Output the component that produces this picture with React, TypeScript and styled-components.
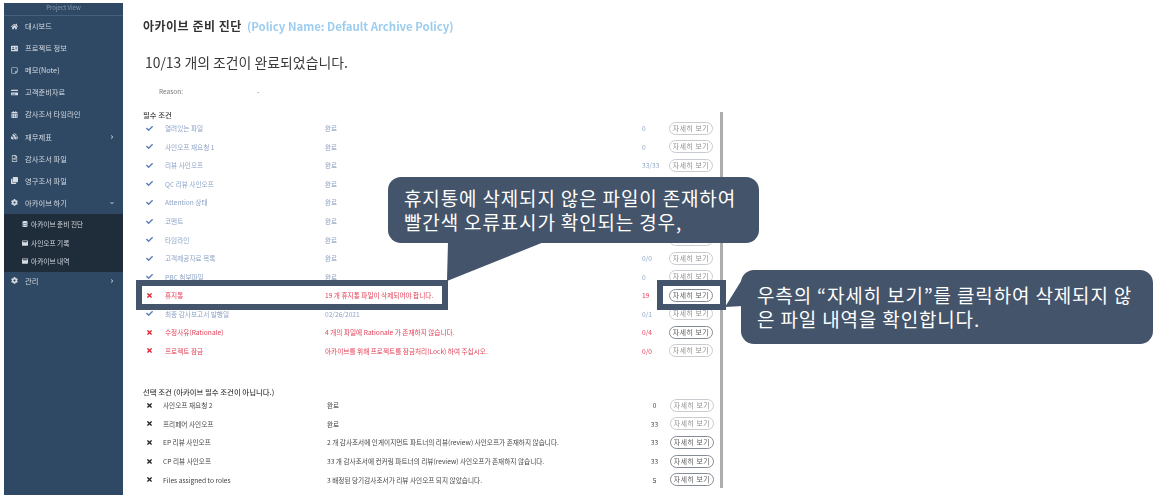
import React from 'react';
import styled, { createGlobalStyle } from 'styled-components';
import {
  FaHome, FaAddressCard, FaRegStickyNote, FaCreditCard, FaCalendarAlt, FaCubes, FaRegFileAlt,
  FaClone, FaCog, FaChevronRight, FaChevronDown, FaCheck, FaTimes, FaDatabase, FaWindowMaximize,
} from 'react-icons/fa';

const FONT = '"Noto Sans CJK KR", "Noto Sans", "Liberation Sans", sans-serif';
const NAVY = '#2f4863';
const SLATE = '#44546a';
const SOFT_BLUE = '#8ea3c6';
const RED = '#e23d55';

// == styles =======================================================================================
const GlobalStyle = createGlobalStyle`
  html, body {
    margin: 0;
    padding: 0;
    background: #fff;
    font-family: ${ FONT };
    overflow: hidden;
  }
`;

const Page = styled.div`
  position: relative;
  display: flex;
  width: 1155px;
  height: 497px;
  overflow: hidden;
`;

const Sidebar = styled.nav`
  flex: none;
  width: 119px;
  height: 492px;
  margin: 3px 0 0 4px;
  background: ${ NAVY };
  color: #d5dce4;
  filter: blur(0.3px);
`;

const SidebarHeader = styled.div`
  height: 12px;
  line-height: 9px;
  text-align: center;
  font-size: 6px;
  color: #8b9db0;
  border-bottom: 1px solid #43607c;
`;

const NavList = styled.div`
  display: flex;
  flex-direction: column;
  margin-top: -1px;
`;

const NavItem = styled.div`
  display: flex;
  align-items: center;
  height: ${ ( { $short } ) => $short ? '18px' : '22.1px' };
  padding: 0 9px 0 7px;
  font-size: 7.3px;
  svg { flex: none; width: 7px; height: 7px; }
`;

const Chevron = styled.span`
  display: flex;
  svg { width: 4px; height: 4px; }
`;

const NavLabel = styled.span`
  flex: 1;
  margin-left: 7px;
  white-space: nowrap;
`;

const SubList = styled.div`
  display: flex;
  flex-direction: column;
  background: #1f2d3a;
  padding: 1px 0;
`;

const SubItem = styled.div`
  display: flex;
  align-items: center;
  height: 18.6px;
  padding-left: 18px;
  font-size: 6.7px;
  white-space: nowrap;
  svg { flex: none; width: 6px; height: 6px; margin-right: 3px; }
`;

const Main = styled.main`
  flex: none;
  width: 600px;
  padding-left: 20px;
  filter: blur(0.3px);
`;

const Title = styled.h1`
  margin: 17px 0 0;
  height: 18px;
  line-height: 18px;
  font-size: 12px;
  font-weight: 700;
  color: #333;
  white-space: nowrap;
  letter-spacing: 0.5px;
`;

const Policy = styled.span`
  margin-left: 2px;
  color: #9ccdef;
  font-size: 11.4px;
  letter-spacing: 0;
`;

const Summary = styled.h2`
  margin: 17px 0 0 2px;
  height: 20px;
  line-height: 20px;
  font-size: 13.9px;
  font-weight: 400;
  color: #3a3a3a;
  white-space: nowrap;
`;

const ReasonRow = styled.div`
  display: flex;
  margin: 14px 0 0 16px;
  height: 10px;
  line-height: 10px;
  font-size: 6.5px;
  color: #777;
`;

const ReasonLabel = styled.span`
  width: 98px;
`;

const TableWrap = styled.div`
  display: flex;
  margin: 16px 0 0 -3px;
  width: 583px;
  height: 376px;
`;

const TableBody = styled.div`
  flex: 1;
`;

const Scrollbar = styled.div`
  flex: none;
  width: 3px;
  background: #adadad;
`;

const SectionTitle = styled.div`
  height: 8px;
  padding-left: 3px;
  margin-top: ${ ( { $top } ) => $top }px;
  line-height: 8px;
  font-size: 7.4px;
  font-weight: 500;
  color: #444;
  white-space: nowrap;
`;

const Rows = styled.div`
  display: flex;
  flex-direction: column;
`;

const Row = styled.div`
  display: grid;
  grid-template-columns: ${ ( { $optional } ) => $optional ? '19px 164px 310px 33px' : '21px 160px 317px 27px' } 44px;
  align-items: center;
  height: 18.55px;
  padding-left: 4px;
  font-size: 6.65px;
  white-space: nowrap;
  color: ${ ( { $tone } ) => $tone === 'red' ? RED : $tone === 'dark' ? '#444' : SOFT_BLUE };
`;

const RowIcon = styled.span`
  display: flex;
  justify-content: flex-start;
  color: ${ ( { $tone } ) => $tone === 'red' ? '#e01f2f' : $tone === 'dark' ? '#222' : '#5b7fb8' };
  svg { width: 7px; height: 7px; margin-left: 2px; }
`;

const Count = styled.span`
  text-align: ${ ( { $optional } ) => $optional ? 'center' : 'left' };
  padding-left: ${ ( { $optional } ) => $optional ? '2px' : '0' };
`;

const DetailButton = styled.button`
  width: 44px;
  height: 13px;
  padding: 0;
  border-radius: 7px;
  border: 1px solid ${ ( { $active } ) => $active ? '#858b94' : '#c8cbcf' };
  background: #fff;
  font-family: ${ FONT };
  font-size: 6.8px;
  line-height: 11px;
  letter-spacing: 0.6px;
  color: ${ ( { $active } ) => $active ? '#555' : '#8c8c8c' };
`;

const Callout = styled.div`
  position: absolute;
  box-sizing: border-box;
  background: ${ SLATE };
  border-radius: 13px;
  color: #fff;
  font-size: 19px;
  line-height: 24px;
  letter-spacing: 0.85px;
  white-space: nowrap;
`;

const TrashCallout = styled( Callout )`
  left: 388px;
  top: 177px;
  width: 371px;
  height: 66px;
  padding: 9px 0 0 16px;
`;

const DetailCallout = styled( Callout )`
  left: 741px;
  top: 270px;
  width: 412px;
  height: 74px;
  padding: 13px 0 0 16px;
`;

const Tail = styled.svg`
  position: absolute;
  display: block;
  fill: ${ SLATE };
`;

const TrashTail = styled( Tail )`
  left: 58px;
  top: 65px;
  width: 100px;
  height: 40px;
`;

const DetailTail = styled( Tail )`
  left: -16px;
  top: 8px;
  width: 18px;
  height: 32px;
`;

const Highlight = styled.div`
  position: absolute;
  box-sizing: border-box;
  top: 280px;
  height: 30px;
  border: 6px solid ${ SLATE };
`;

const RowHighlight = styled( Highlight )`
  left: 136px;
  width: 312px;
`;

const ButtonHighlight = styled( Highlight )`
  left: 657px;
  width: 69px;
`;

// == data =========================================================================================
const required = [
  { name: '열려있는 파일', status: '완료', count: '0' },
  { name: '사인오프 재요청 1', status: '완료', count: '0' },
  { name: '리뷰 사인오프', status: '완료', count: '33/33' },
  { name: 'QC 리뷰 사인오프', status: '완료', count: '' },
  { name: 'Attention 상태', status: '완료', count: '' },
  { name: '코멘트', status: '완료', count: '' },
  { name: '타임라인', status: '완료', count: '' },
  { name: '고객제공자료 목록', status: '완료', count: '0/0' },
  { name: 'PBC 첨부파일', status: '완료', count: '0' },
  { name: '휴지통', status: '19 개 휴지통 파일이 삭제되어야 합니다.', count: '19', failed: true, active: true },
  { name: '최종 감사보고서 발행일', status: '02/26/2021', count: '0/1' },
  { name: '수정사유(Rationale)', status: '4 개의 파일에 Rationale 가 존재하지 않습니다.', count: '0/4', failed: true, active: true },
  { name: '프로젝트 잠금', status: '아카이브를 위해 프로젝트를 잠금처리(Lock) 하여 주십시오.', count: '0/0', failed: true },
];

const optional = [
  { name: '사인오프 재요청 2', status: '완료', count: '0' },
  { name: '프리페어 사인오프', status: '완료', count: '33' },
  { name: 'EP 리뷰 사인오프', status: '2 개 감사조서에 인게이지먼트 파트너의 리뷰(review) 사인오프가 존재하지 않습니다.', count: '33', active: true },
  { name: 'CP 리뷰 사인오프', status: '33 개 감사조서에 컨커링 파트너의 리뷰(review) 사인오프가 존재하지 않습니다.', count: '33', active: true },
  { name: 'Files assigned to roles', status: '3 배정된 당기감사조서가 리뷰 사인오프 되지 않았습니다.', count: '5', active: true },
];

// == components ===================================================================================
function App(): JSX.Element {
  return (
    <Page>
      <GlobalStyle />
      <Sidebar>
        <SidebarHeader>Project View</SidebarHeader>
        <NavList>
          <NavItem><FaHome /><NavLabel>대시보드</NavLabel></NavItem>
          <NavItem><FaAddressCard /><NavLabel>프로젝트 정보</NavLabel></NavItem>
          <NavItem><FaRegStickyNote /><NavLabel>메모(Note)</NavLabel></NavItem>
          <NavItem><FaCreditCard /><NavLabel>고객준비자료</NavLabel></NavItem>
          <NavItem><FaCalendarAlt /><NavLabel>감사조서 타임라인</NavLabel></NavItem>
          <NavItem><FaCubes /><NavLabel>재무제표</NavLabel><Chevron><FaChevronRight /></Chevron></NavItem>
          <NavItem><FaRegFileAlt /><NavLabel>감사조서 파일</NavLabel></NavItem>
          <NavItem><FaClone /><NavLabel>영구조서 파일</NavLabel></NavItem>
          <NavItem><FaCog /><NavLabel>아카이브 하기</NavLabel><Chevron><FaChevronDown /></Chevron></NavItem>
          <SubList>
            <SubItem><FaDatabase />아카이브 준비 진단</SubItem>
            <SubItem><FaWindowMaximize />사인오프 기록</SubItem>
            <SubItem><FaWindowMaximize />아카이브 내역</SubItem>
          </SubList>
          <NavItem $short><FaCog /><NavLabel>관리</NavLabel><Chevron><FaChevronRight /></Chevron></NavItem>
        </NavList>
      </Sidebar>

      <Main>
        <Title>아카이브 준비 진단 <Policy>(Policy Name: Default Archive Policy)</Policy></Title>
        <Summary>10/13 개의 조건이 완료되었습니다.</Summary>
        <ReasonRow><ReasonLabel>Reason:</ReasonLabel><span>-</span></ReasonRow>
        <TableWrap>
          <TableBody>
            <SectionTitle $top={ -1 }>필수 조건</SectionTitle>
            <Rows>
              { required.map( ( row ) => {
                const tone = row.failed ? 'red' : 'soft';
                return (
                  <Row key={ row.name } $tone={ tone }>
                    <RowIcon $tone={ tone }>{ row.failed ? <FaTimes /> : <FaCheck /> }</RowIcon>
                    <span>{ row.name }</span>
                    <span>{ row.status }</span>
                    <Count>{ row.count }</Count>
                    <DetailButton $active={ row.active }>자세히 보기</DetailButton>
                  </Row>
                );
              } ) }
            </Rows>
            <SectionTitle $top={ 28 }>선택 조건 (아카이브 필수 조건이 아닙니다.)</SectionTitle>
            <Rows>
              { optional.map( ( row ) => (
                <Row key={ row.name } $tone="dark" $optional>
                  <RowIcon $tone="dark"><FaTimes /></RowIcon>
                  <span>{ row.name }</span>
                  <span>{ row.status }</span>
                  <Count $optional>{ row.count }</Count>
                  <DetailButton $active={ row.active }>자세히 보기</DetailButton>
                </Row>
              ) ) }
            </Rows>
          </TableBody>
          <Scrollbar />
        </TableWrap>
      </Main>

      <RowHighlight />
      <ButtonHighlight />
      <TrashCallout>
        <TrashTail viewBox="0 0 100 40"><polygon points="2,0 98,0 1,39" /></TrashTail>
        휴지통에 삭제되지 않은 파일이 존재하여<br />빨간색 오류표시가 확인되는 경우,
      </TrashCallout>
      <DetailCallout>
        <DetailTail viewBox="0 0 18 32"><polygon points="18,0 0,29 18,28" /></DetailTail>
        우측의 “자세히 보기”를 클릭하여 삭제되지 않<br />은 파일 내역을 확인합니다.
      </DetailCallout>
    </Page>
  );
}

export default App;
